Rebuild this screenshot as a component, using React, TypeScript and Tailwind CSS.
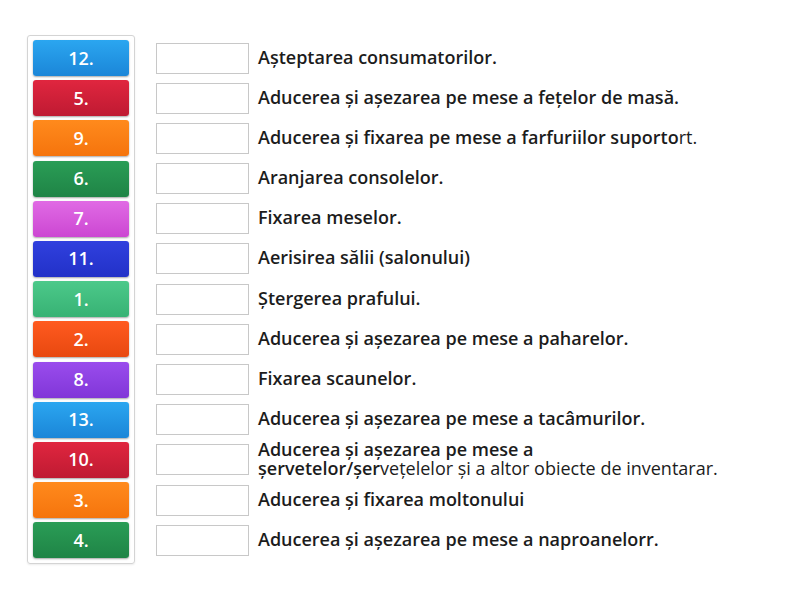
import React from 'react';

type Item = {
    num: string;
    color: string;
    text: React.ReactNode;
};

const items: Item[] = [
    { num: '12.', color: 'bg-gradient-to-b from-[#2ba6f0] to-[#1b86d8]', text: 'Așteptarea consumatorilor.' },
    { num: '5.', color: 'bg-gradient-to-b from-[#e0263f] to-[#bf1a32]', text: 'Aducerea și așezarea pe mese a fețelor de masă.' },
    { num: '9.', color: 'bg-gradient-to-b from-[#ff8a1c] to-[#f5740c]', text: <>Aducerea și fixarea pe mese a farfuriilor suporto<span className="font-normal">rt.</span></> },
    { num: '6.', color: 'bg-gradient-to-b from-[#2a9d56] to-[#1f8446]', text: 'Aranjarea consolelor.' },
    { num: '7.', color: 'bg-gradient-to-b from-[#e06ae4] to-[#cc46d2]', text: 'Fixarea meselor.' },
    { num: '11.', color: 'bg-gradient-to-b from-[#3040de] to-[#2231c8]', text: 'Aerisirea sălii (salonului)' },
    { num: '1.', color: 'bg-gradient-to-b from-[#4cc98a] to-[#37b274]', text: 'Ștergerea prafului.' },
    { num: '2.', color: 'bg-gradient-to-b from-[#ff5a1f] to-[#e8480f]', text: 'Aducerea și așezarea pe mese a paharelor.' },
    { num: '8.', color: 'bg-gradient-to-b from-[#9a4ced] to-[#8136d8]', text: 'Fixarea scaunelor.' },
    { num: '13.', color: 'bg-gradient-to-b from-[#2ba6f0] to-[#1b86d8]', text: 'Aducerea și așezarea pe mese a tacâmurilor.' },
    {
        num: '10.',
        color: 'bg-gradient-to-b from-[#e0263f] to-[#bf1a32]',
        text: <>Aducerea și așezarea pe mese a<br />șervetelor/șer<span className="font-normal">vețelelor și a altor obiecte de inventarar.</span></>,
    },
    { num: '3.', color: 'bg-gradient-to-b from-[#ff8a1c] to-[#f5740c]', text: 'Aducerea și fixarea moltonului' },
    { num: '4.', color: 'bg-gradient-to-b from-[#2a9d56] to-[#1f8446]', text: 'Aducerea și așezarea pe mese a naproanelorr.' },
];

const App = () => {
    return (
        <div className="w-[800px] h-[600px] bg-white font-['Open_Sans',sans-serif] text-[#1c1c1c]">
            <div className="flex pt-[35px] pl-[27px]">
                {/* Tile column */}
                <div className="w-[108px] border border-[#d4d4d4] rounded-[3px] px-[5px] pt-[4px] pb-[5px] flex flex-col gap-[4.2px] shadow-[0_1px_2px_rgba(0,0,0,0.08)]">
                    {items.map((item) => (
                        <div
                            key={item.num}
                            className={`${item.color} h-[36px] rounded-[3px] flex items-center justify-center text-white text-[18px] font-semibold shadow-[0_1px_2px_rgba(0,0,0,0.35)]`}
                        >
                            {item.num}
                        </div>
                    ))}
                </div>

                {/* Answer rows */}
                <div className="ml-[21px] pt-[5px] flex flex-col gap-[4.2px]">
                    {items.map((item) => (
                        <div key={item.num} className="h-[36px] flex items-center">
                            <div className="w-[93px] h-[31px] border border-[#c8c8c8] bg-white shrink-0" />
                            <div className="ml-[9px] mt-[-2px] text-[18px] leading-[19px] font-semibold whitespace-nowrap">
                                {item.text}
                            </div>
                        </div>
                    ))}
                </div>
            </div>
        </div>
    );
};

export default App;
